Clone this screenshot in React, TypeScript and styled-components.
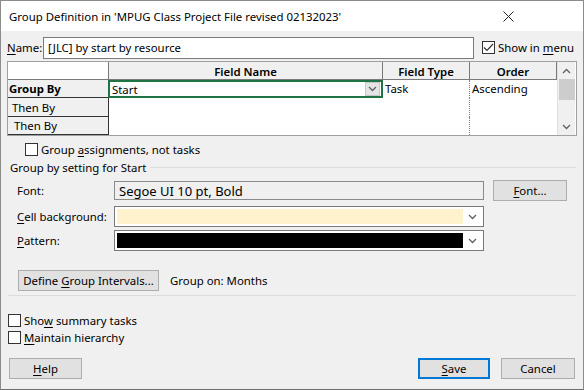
import React from "react";
import styled, { createGlobalStyle } from "styled-components";

const GlobalStyle = createGlobalStyle`
  html, body {
    margin: 0;
    padding: 0;
    background: #ffffff;
  }
  * {
    box-sizing: border-box;
  }
`;

const UI_FONT = `"Segoe UI", "Noto Sans", "Open Sans", sans-serif`;

const Window = styled.div`
  width: 584px;
  height: 390px;
  display: flex;
  flex-direction: column;
  border: 1px solid #8c8c8c;
  border-bottom-color: #6e6e6e;
  font-family: ${UI_FONT};
  font-size: 11.4px;
  color: #000;
  background: #f0f0f0;
  overflow: hidden;
`;

const TitleBar = styled.div`
  height: 30px;
  flex: none;
  display: flex;
  align-items: center;
  justify-content: space-between;
  background: #ffffff;
  padding-left: 8px;
`;

const Title = styled.span`
  font-size: 11.4px;
`;

const CloseBox = styled.div`
  width: 46px;
  height: 30px;
  display: flex;
  align-items: center;
  justify-content: center;
  margin-right: 52px;
`;

const Body = styled.div`
  flex: 1;
  display: flex;
  flex-direction: column;
  padding: 6px 6px 0 6px;
`;

const NameRow = styled.div`
  display: flex;
  align-items: center;
  height: 21px;
`;

const Label = styled.span<{ $w?: number }>`
  width: ${(p) => (p.$w ? `${p.$w}px` : "auto")};
  flex: none;
  white-space: nowrap;
`;

const TextBox = styled.div`
  width: 431px;
  height: 22px;
  background: #fff;
  border: 1px solid #7a7a7a;
  display: flex;
  align-items: center;
  padding-left: 4px;
`;

const CheckWrap = styled.label<{ $ml?: number }>`
  display: flex;
  align-items: center;
  gap: 3px;
  margin-left: ${(p) => p.$ml ?? 0}px;
  white-space: nowrap;
`;

const Box = styled.span`
  width: 13px;
  height: 13px;
  background: #fff;
  border: 1px solid #333;
  display: flex;
  align-items: center;
  justify-content: center;
`;

const U = styled.span`
  text-decoration: underline;
  text-underline-offset: 2px;
`;

/* ---- grid ---- */

const GridFrame = styled.div`
  margin-top: 3px;
  display: flex;
  border: 1px solid #a0a0a0;
  width: 570px;
  height: 75px;
  background: #fff;
`;

const Table = styled.div`
  display: grid;
  grid-template-columns: 101px 274px 87px 87px;
  grid-template-rows: 18px 18px 19px 18px;
`;

const HeadCell = styled.div<{ $corner?: boolean }>`
  background: #f0f0f0;
  border-right: 1px solid #7a7a7a;
  border-bottom: 1px solid #7a7a7a;
  display: flex;
  align-items: center;
  justify-content: center;
  font-weight: 600;
  padding-top: 1px;
  ${(p) => p.$corner && "background: #fff;"}
`;

const RowHead = styled.div<{ $bold?: boolean; $indent: number }>`
  background: #f0f0f0;
  border-right: 1px solid #333;
  border-bottom: 1px solid #333;
  display: flex;
  align-items: center;
  padding-left: ${(p) => p.$indent}px;
  font-weight: ${(p) => (p.$bold ? 700 : 400)};
`;

const DataCell = styled.div<{ $dotted?: boolean }>`
  background: #fff;
  display: flex;
  align-items: flex-start;
  padding: 1px 0 0 2px;
  border-right: 1px ${(p) => (p.$dotted ? "dotted #808080" : "solid transparent")};
`;

const ActiveCell = styled.div`
  background: #fff;
  border: 2px solid #217346;
  display: flex;
  align-items: center;
  justify-content: space-between;
  padding-left: 2px;
  margin-left: -1px;
`;

const DropBtn = styled.span`
  width: 15px;
  height: 14px;
  background: #e5e5e5;
  border: 1px solid #c8c8c8;
  display: flex;
  align-items: center;
  justify-content: center;
  margin-right: 1px;
`;

const ScrollBar = styled.div`
  width: 18px;
  background: #f0f0f0;
  display: flex;
  flex-direction: column;
  align-items: center;
  border-left: 1px solid #e0e0e0;
`;

const ScrollArrow = styled.div`
  height: 17px;
  width: 100%;
  display: flex;
  align-items: center;
  justify-content: center;
`;

const Thumb = styled.div`
  width: 16px;
  height: 21px;
  background: #cdcdcd;
`;

const Spacer = styled.div`
  flex: 1;
`;

/* ---- settings ---- */

const GroupAssign = styled.div`
  margin: 4px 0 0 18px;
  height: 18px;
  display: flex;
  align-items: center;
`;

const Legend = styled.div`
  display: flex;
  align-items: center;
  gap: 4px;
  margin: 0 0 0 3px;
  height: 18px;
  &::after {
    content: "";
    flex: 1;
    height: 1px;
    background: #dcdcdc;
    margin-right: 1px;
  }
`;

const FormRow = styled.div<{ $mt: number }>`
  display: flex;
  align-items: center;
  margin-top: ${(p) => p.$mt}px;
  padding-left: 10px;
`;

const FontField = styled.div`
  width: 370px;
  height: 19px;
  background: #f0f0f0;
  border: 1px solid #8a8a8a;
  display: flex;
  align-items: center;
  padding-left: 4px;
  font-size: 13px;
`;

const Combo = styled.div`
  width: 370px;
  height: 21px;
  background: #fff;
  border: 1px solid #7a7a7a;
  display: flex;
  align-items: center;
  padding: 2px;
  gap: 5px;
`;

const Swatch = styled.div<{ $c: string }>`
  width: 346px;
  height: 15px;
  background: ${(p) => p.$c};
`;

const Button = styled.div<{ $w: number; $primary?: boolean }>`
  width: ${(p) => p.$w}px;
  height: 21px;
  background: #e1e1e1;
  border: 1px solid ${(p) => (p.$primary ? "#0078d7" : "#adadad")};
  box-shadow: ${(p) => (p.$primary ? "inset 0 0 0 1px #0078d7" : "none")};
  display: flex;
  align-items: center;
  justify-content: center;
  flex: none;
`;

const IntervalRow = styled.div`
  display: flex;
  align-items: center;
  gap: 11px;
  margin: 19px 0 0 11px;
`;

const Separator = styled.div`
  height: 1px;
  background: #dcdcdc;
  margin: 4px 1px 0 1px;
`;

const CheckList = styled.div`
  display: flex;
  flex-direction: column;
  gap: 2px;
  margin-top: 17px;
  padding-left: 1px;
`;

const Footer = styled.div`
  display: flex;
  align-items: center;
  margin-top: 13px;
  padding-left: 2px;
  gap: 11px;
`;

const Chevron = ({ up }: { up?: boolean }) => (
  <svg width="9" height="6" viewBox="0 0 9 6">
    <path
      d={up ? "M1 5 L4.5 1.5 L8 5" : "M1 1 L4.5 4.5 L8 1"}
      fill="none"
      stroke="#606060"
      strokeWidth="1.3"
    />
  </svg>
);

const Check = ({ checked }: { checked?: boolean }) => (
  <Box>
    {checked && (
      <svg width="11" height="9" viewBox="0 0 11 9">
        <path d="M1 4.5 L4 7.5 L10 1" fill="none" stroke="#333" strokeWidth="1.2" />
      </svg>
    )}
  </Box>
);

export default function App() {
  return (
    <>
      <GlobalStyle />
      <Window>
        <TitleBar>
          <Title>Group Definition in 'MPUG Class Project File revised 02132023'</Title>
          <CloseBox>
            <svg width="11" height="11" viewBox="0 0 11 11">
              <path d="M0.5 0.5 L10.5 10.5 M10.5 0.5 L0.5 10.5" stroke="#222" strokeWidth="1" />
            </svg>
          </CloseBox>
        </TitleBar>

        <Body>
          <NameRow>
            <Label $w={36}>
              <U>N</U>ame:
            </Label>
            <TextBox>[JLC] by start by resource</TextBox>
            <CheckWrap $ml={8}>
              <Check checked />
              <span>
                Show in <U>m</U>enu
              </span>
            </CheckWrap>
          </NameRow>

          <GridFrame>
            <Table>
              <HeadCell $corner />
              <HeadCell>Field Name</HeadCell>
              <HeadCell>Field Type</HeadCell>
              <HeadCell>Order</HeadCell>

              <RowHead $bold $indent={1}>Group By</RowHead>
              <ActiveCell>
                <span>Start</span>
                <DropBtn>
                  <Chevron />
                </DropBtn>
              </ActiveCell>
              <DataCell $dotted>Task</DataCell>
              <DataCell>Ascending</DataCell>

              <RowHead $indent={4}>Then By</RowHead>
              <DataCell />
              <DataCell $dotted />
              <DataCell />

              <RowHead $indent={6}>Then By</RowHead>
              <DataCell />
              <DataCell $dotted />
              <DataCell />
            </Table>
            <ScrollBar>
              <ScrollArrow>
                <Chevron up />
              </ScrollArrow>
              <Thumb />
              <Spacer />
              <ScrollArrow>
                <Chevron />
              </ScrollArrow>
            </ScrollBar>
          </GridFrame>

          <GroupAssign>
            <CheckWrap>
              <Check />
              <span>
                Group <U>a</U>ssignments, not tasks
              </span>
            </CheckWrap>
          </GroupAssign>

          <Legend>Group by setting for Start</Legend>

          <FormRow $mt={4}>
            <Label $w={97}>Font:</Label>
            <FontField>Segoe UI 10 pt, Bold</FontField>
            <Spacer />
            <Button $w={74} style={{ marginRight: 10 }}>
              <span>
                <U>F</U>ont...
              </span>
            </Button>
          </FormRow>

          <FormRow $mt={5}>
            <Label $w={97}>
              <U>C</U>ell background:
            </Label>
            <Combo>
              <Swatch $c="#fff2cc" />
              <Chevron />
            </Combo>
          </FormRow>

          <FormRow $mt={3}>
            <Label $w={97}>
              <U>P</U>attern:
            </Label>
            <Combo>
              <Swatch $c="#000000" />
              <Chevron />
            </Combo>
          </FormRow>

          <IntervalRow>
            <Button $w={141}>
              <span>
                Define <U>G</U>roup Intervals...
              </span>
            </Button>
            <span>Group on: Months</span>
          </IntervalRow>

          <Separator />

          <CheckList>
            <CheckWrap>
              <Check />
              <span>
                Sho<U>w</U> summary tasks
              </span>
            </CheckWrap>
            <CheckWrap>
              <Check />
              <span>
                <U>M</U>aintain hierarchy
              </span>
            </CheckWrap>
          </CheckList>

          <Footer>
            <Button $w={73}>
              <U>H</U>elp
            </Button>
            <Spacer />
            <Button $w={72} $primary>
              <span>
                <U>S</U>ave
              </span>
            </Button>
            <Button $w={74} style={{ marginRight: 2 }}>
              Cancel
            </Button>
          </Footer>
        </Body>
      </Window>
    </>
  );
}
